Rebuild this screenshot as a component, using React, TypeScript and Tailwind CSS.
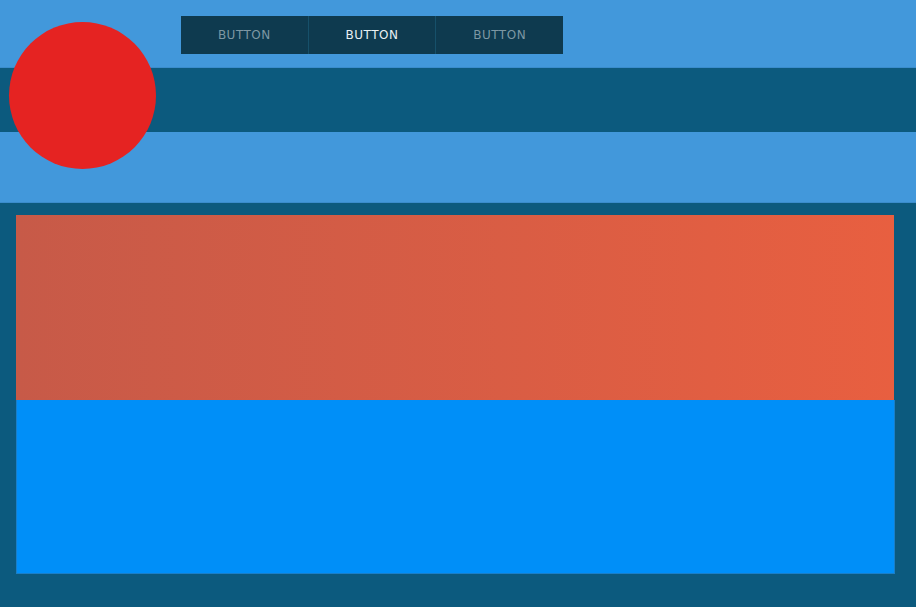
import React from "react";

export default function App() {
  const btns = [
    { label: "BUTTON", active: false },
    { label: "BUTTON", active: true },
    { label: "BUTTON", active: false },
  ];
  return (
    <div
      className="w-[916px] h-[607px] bg-[#0c5a7e] overflow-hidden relative"
      style={{ fontFamily: '"DejaVu Sans", "Liberation Sans", sans-serif' }}
    >
      <div className="h-[203px] bg-[#4298db] flex flex-col">
        <div className="h-[68px] pl-[181px] pt-[16px] border-b border-[#3a8ccc]">
          <div className="flex w-[382px] h-[38px] bg-[#0e3a4f]">
            {btns.map((b, i) => (
              <div
                key={i}
                className={`flex-1 flex items-center justify-center text-[12px] tracking-[0.5px] ${
                  i > 0 ? "border-l border-[#16506a]" : ""
                } ${b.active ? "text-[#e8f0f3]" : "text-[#7d97a3]"}`}
              >
                {b.label}
              </div>
            ))}
          </div>
        </div>
        <div className="h-[64px] bg-[#0c5a7e]" />
        <div className="flex-1 border-b border-[#3a8ccc]" />
      </div>
      <div className="absolute left-[9px] top-[22px] w-[147px] h-[147px] rounded-full bg-[#e52322]" />
      <div className="pt-[12px] pl-[16px]">
        <div className="w-[878px] h-[185px] bg-gradient-to-r from-[#c75a48] to-[#e85f40]" />
        <div className="w-[879px] h-[174px] bg-[#008ff8] border border-[#1a7fc8] border-t-0" />
      </div>
    </div>
  );
}
